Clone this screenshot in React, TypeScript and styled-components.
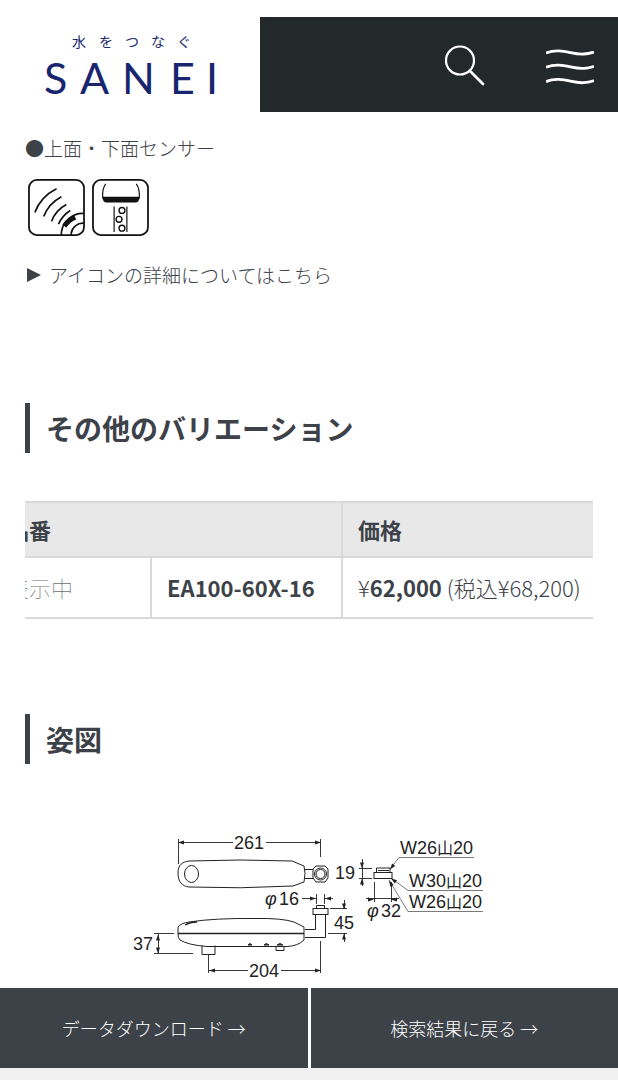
import React, { useLayoutEffect, useRef } from "react";
import styled, { createGlobalStyle } from "styled-components";

const ink = "#3d4249";
const line = "#d9d9d9";

const GlobalStyle = createGlobalStyle`
  * { box-sizing: border-box; }
  body {
    margin: 0;
    background: #fff;
    color: ${ink};
    font-family: "Noto Sans CJK JP", "Noto Sans", sans-serif;
    font-weight: 300;
  }
`;

const Header = styled.header`
  display: flex;
  height: 112px;
  padding-top: 17px;
`;

const LogoLink = styled.a`
  flex: 0 0 260px;
  display: block;
`;

const Tools = styled.div`
  flex: 1;
  display: flex;
  align-items: center;
  justify-content: flex-end;
  gap: 52px;
  padding-right: 20px;
  background: #23282b;
`;

const IconButton = styled.button`
  display: flex;
  padding: 4px;
  border: 0;
  background: none;
  color: #fff;
  cursor: pointer;
`;

const Main = styled.main`
  padding: 20px 25px 0;
`;

const Line = styled.p`
  margin: 0;
  font-size: 19px;
  line-height: 32px;
`;

const IconRow = styled.div`
  display: flex;
  gap: 7px;
  padding: 15px 0 23px 3px;
`;

const DetailLink = styled.a`
  display: flex;
  align-items: center;
  gap: 8px;
  padding-left: 2px;
  color: inherit;
  font-size: 19px;
  line-height: 32px;
  text-decoration: none;
`;

const SectionTitle = styled.h2<{ $top: number }>`
  margin: ${(p) => p.$top}px 0 0;
  padding-left: 16px;
  border-left: 5px solid ${ink};
  font-size: 28px;
  font-weight: 700;
  line-height: 50px;
`;

const TableScroller = styled.div`
  margin-top: 48px;
  overflow-x: auto;
  scrollbar-width: none;
`;

const Table = styled.table`
  width: 609px;
  table-layout: fixed;
  border-collapse: separate;
  border-spacing: 0;
  border-top: 2px solid ${line};
  font-size: 22px;
`;

const HeadCell = styled.th`
  height: 55px;
  padding: 0 15px 2px;
  border-right: 2px solid ${line};
  border-bottom: 2px solid ${line};
  background: #e8e8e8;
  font-weight: 700;
  text-align: left;
`;

const Cell = styled.td<{ $faint?: boolean }>`
  height: 61px;
  padding: 0 15px 2px;
  border-right: 2px solid ${line};
  border-bottom: 2px solid ${line};
  color: ${(p) => (p.$faint ? "#6b6f74" : ink)};
  font-weight: ${(p) => (p.$faint ? 100 : 300)};
  white-space: nowrap;
`;

const Strong = styled.strong`
  font-weight: 700;
`;

const Figure = styled.figure`
  display: flex;
  justify-content: center;
  margin: 68px 0 0;
`;

const ActionBar = styled.nav`
  display: flex;
  gap: 3px;
  margin-top: 6px;
  border-bottom: 12px solid #f0f0f0;
`;

const Action = styled.a`
  flex: 1;
  background: ${ink};
  color: #fff;
  font-size: 18px;
  line-height: 80px;
  text-align: center;
  text-decoration: none;
`;

const Logo = () => (
  <svg width="260" height="95" viewBox="0 17 260 95" role="img" aria-label="水をつなぐ SANEI" fill="#18256f">
    <text x="72 99 125 151 177" y="47" fontSize="14" fontWeight="400" fontFamily="'Noto Sans CJK JP', sans-serif">水をつなぐ</text>
    <text x="44 80 122 170 206" y="94" fontSize="43" fontWeight="400" fontFamily="Lato, sans-serif">SANEI</text>
  </svg>
);

const SearchIcon = () => (
  <svg width="42" height="42" viewBox="0 0 42 42" fill="none" stroke="currentColor" strokeLinecap="round">
    <circle cx="16" cy="16.500" r="14" strokeWidth="2.200" />
    <path d="M26 27 39 40" strokeWidth="2.800" />
  </svg>
);

const WaveMenuIcon = () => (
  <svg width="48" height="42" viewBox="0 0 48 42" fill="none" stroke="currentColor" strokeWidth="2.800">
    {[1, 15.3, 29.6].map((y) => (
      <path key={y} transform={`translate(0 ${y})`} d="M0 8C15 2 27 10.500 38 9C43 9 45 8 48 7" />
    ))}
  </svg>
);

const WaveSensorIcon = () => (
  <svg width="57" height="57" viewBox="0 0 58 58" fill="none" stroke="#111" role="img" aria-label="上面センサー">
    <rect x="1" y="1" width="56" height="56" rx="8" strokeWidth="1.800" />
    <g strokeWidth="1.700">
      <path d="M7 34Q13 18 29 10M16 38Q21 25 34 18M24 43Q28 32 39 26M31 46Q35 37 43 32" />
      <path d="M34 57V54A22 22 0 0 1 57 35M44 57V55A12 12 0 0 1 57 45" />
    </g>
    <path d="M37 48Q41 42 48 39" strokeWidth="5" />
  </svg>
);

const WaterSensorIcon = () => (
  <svg width="57" height="57" viewBox="0 0 58 58" fill="none" stroke="#111" role="img" aria-label="下面センサー">
    <rect x="1" y="1" width="56" height="56" rx="8" strokeWidth="1.800" />
    <path d="M14 5Q10 10 11 20M45 5Q49 10 48 20" strokeWidth="1.200" />
    <path d="M10.500 18H48.500Q48 24 44 24H15Q11 24 10.500 18Z" fill="#111" stroke="none" />
    <path d="M22.500 28V54M35.500 28V54" strokeWidth="1.200" />
    <g strokeWidth="1.400">
      <circle cx="30.500" cy="32" r="3" />
      <circle cx="27.500" cy="41" r="3" />
      <circle cx="30.500" cy="50" r="3" />
    </g>
  </svg>
);

const Triangle = () => (
  <svg width="14" height="16" viewBox="0 0 14 16" fill={ink} aria-hidden="true">
    <path d="M0 1 14 8 0 15Z" />
  </svg>
);

const arrowHeads: Array<[number, number, number]> = [
  [178, 842, 180],
  [321, 842, 0],
  [209, 970, 180],
  [321, 970, 0],
  [158, 934, -90],
  [158, 953, 90],
  [316, 898, 0],
  [325, 898, 180],
  [344, 909, 90],
  [344, 933, -90],
  [362, 868, 90],
  [362, 878, -90],
  [374, 899, 0],
  [391, 899, 180],
  [390, 869, 128],
  [391, 878, 214],
  [389, 880, 240],
];

const threads: Array<[number, number, string]> = [
  [400, 854, "W26"],
  [409, 887, "W30"],
  [409, 908, "W26"],
];

const DimensionDrawing = () => (
  <svg width="356" height="150" viewBox="131 832 356 150" fill="none" stroke="#222" strokeWidth="1" role="img" aria-label="姿図">
    <g strokeWidth="0.900">
      <path d="M178.500 839V864M178 842.500H233M266 842.500H321M320.500 839V857" />
      <path d="M208.500 955V973M209 970.500H248M281 970.500H321M320.500 941V973" />
      <path d="M154 933.500H174M154 953.500H193M158.500 934V953" />
      <path d="M302 898.500H316M325 898.500H333M316.500 894V904M324.500 894V904" />
      <path d="M330 908.500H347M344.500 900V909M328 933.500H347M344.500 933V942" />
      <path d="M359 868.500H372M359 878.500H372M362.500 859V886" />
      <path d="M366 898.500H399M374.500 882V902M391.500 882V902" />
      <path d="M390 869 399 857.500H474M391 878 408 890.500H483M389 880 408 911.500H483" strokeWidth="0.600" />
    </g>
    <g>
      <path d="M178 873C178 865 182 862 189 861Q240 859 292 861L304 866Q306 873 304 882L293 886Q240 889 189 887C182 886 178 882 178 873Z" />
      <ellipse cx="191.500" cy="874" rx="7" ry="8.500" />
      <path d="M305 869.500H313M305 878.500H313" />
      <path d="M313 869 316 866H325L328 869V878L325 882H316L313 878Z" />
      <circle cx="320.500" cy="874" r="6" />
      <circle cx="320.500" cy="874" r="4.500" />
      <path d="M178 934V927Q181 923 189 922Q215 918 255 918.500Q282 918 294 922L304 927V940Q298 946 287 946.500H207Q188 945 180 940Q178 938 178 934Z" />
      <path d="M178 933.500H304" strokeWidth="1.500" />
      <path d="M185 925Q190 922 197 922" strokeWidth="1.400" />
      <path d="M202 945.500V954.500H215V945.500" />
      <path d="M276 946V950.500H284V946" />
      <path d="M248 945Q250 942 252 945ZM264 945Q266 942 269 945ZM277 945Q280 942 283 945Z" fill="#444" />
      <path d="M305 929.500H315.500V914.500M305 937.500H325.500V914.500M315.500 929V914" />
      <rect x="313" y="908.500" width="15" height="6" />
      <path d="M316.500 908V905.500H324.500V908" />
      <rect x="374" y="872.500" width="18" height="6" />
      <path d="M376.500 872V868H390V872M378 870.500H389" />
    </g>
    <g fill="#222" stroke="none">
      {arrowHeads.map(([x, y, turn]) => (
        <path key={`${x}-${y}`} d="M0 0-6 2V-2Z" transform={`translate(${x} ${y + 0.5}) rotate(${turn})`} />
      ))}
    </g>
    <g fill="#222" stroke="none" fontFamily="'Liberation Sans', 'Noto Sans CJK JP', sans-serif" fontSize="18" fontWeight="400">
      <text x="234" y="849">261</text>
      <text x="265" y="905" fontStyle="italic">φ</text>
      <text x="279" y="905">16</text>
      <text x="133" y="950">37</text>
      <text x="249" y="977">204</text>
      <text x="334" y="929">45</text>
      <text x="335" y="879">19</text>
      <text x="367" y="917" fontStyle="italic">φ</text>
      <text x="381" y="917">32</text>
      {threads.map(([x, y, size]) => (
        <text key={y} x={x} y={y}>{size}<tspan fontSize="16">山</tspan>20</text>
      ))}
    </g>
  </svg>
);

export default function App() {
  const scroller = useRef<HTMLDivElement>(null);

  useLayoutEffect(() => {
    if (scroller.current) scroller.current.scrollLeft = 33;
  }, []);

  return (
    <>
      <GlobalStyle />
      <Header>
        <LogoLink href="#"><Logo /></LogoLink>
        <Tools>
          <IconButton type="button" aria-label="検索"><SearchIcon /></IconButton>
          <IconButton type="button" aria-label="メニュー"><WaveMenuIcon /></IconButton>
        </Tools>
      </Header>
      <Main>
        <Line>●上面・下面センサー</Line>
        <IconRow>
          <WaveSensorIcon />
          <WaterSensorIcon />
        </IconRow>
        <DetailLink href="#icons"><Triangle />アイコンの詳細についてはこちら</DetailLink>
        <SectionTitle $top={112}>その他のバリエーション</SectionTitle>
        <TableScroller ref={scroller}>
          <Table>
            <colgroup>
              <col width="160" />
              <col width="191" />
              <col width="258" />
            </colgroup>
            <thead>
              <tr>
                <HeadCell colSpan={2} scope="col">品番</HeadCell>
                <HeadCell scope="col">価格</HeadCell>
              </tr>
            </thead>
            <tbody>
              <tr>
                <Cell $faint>表示中</Cell>
                <Cell><Strong>EA100-60X-16</Strong></Cell>
                <Cell>¥<Strong>62,000</Strong> (税込¥68,200)</Cell>
              </tr>
            </tbody>
          </Table>
        </TableScroller>
        <SectionTitle $top={95}>姿図</SectionTitle>
        <Figure><DimensionDrawing /></Figure>
      </Main>
      <ActionBar>
        <Action href="#download">データダウンロード →</Action>
        <Action href="#results">検索結果に戻る →</Action>
      </ActionBar>
    </>
  );
}
